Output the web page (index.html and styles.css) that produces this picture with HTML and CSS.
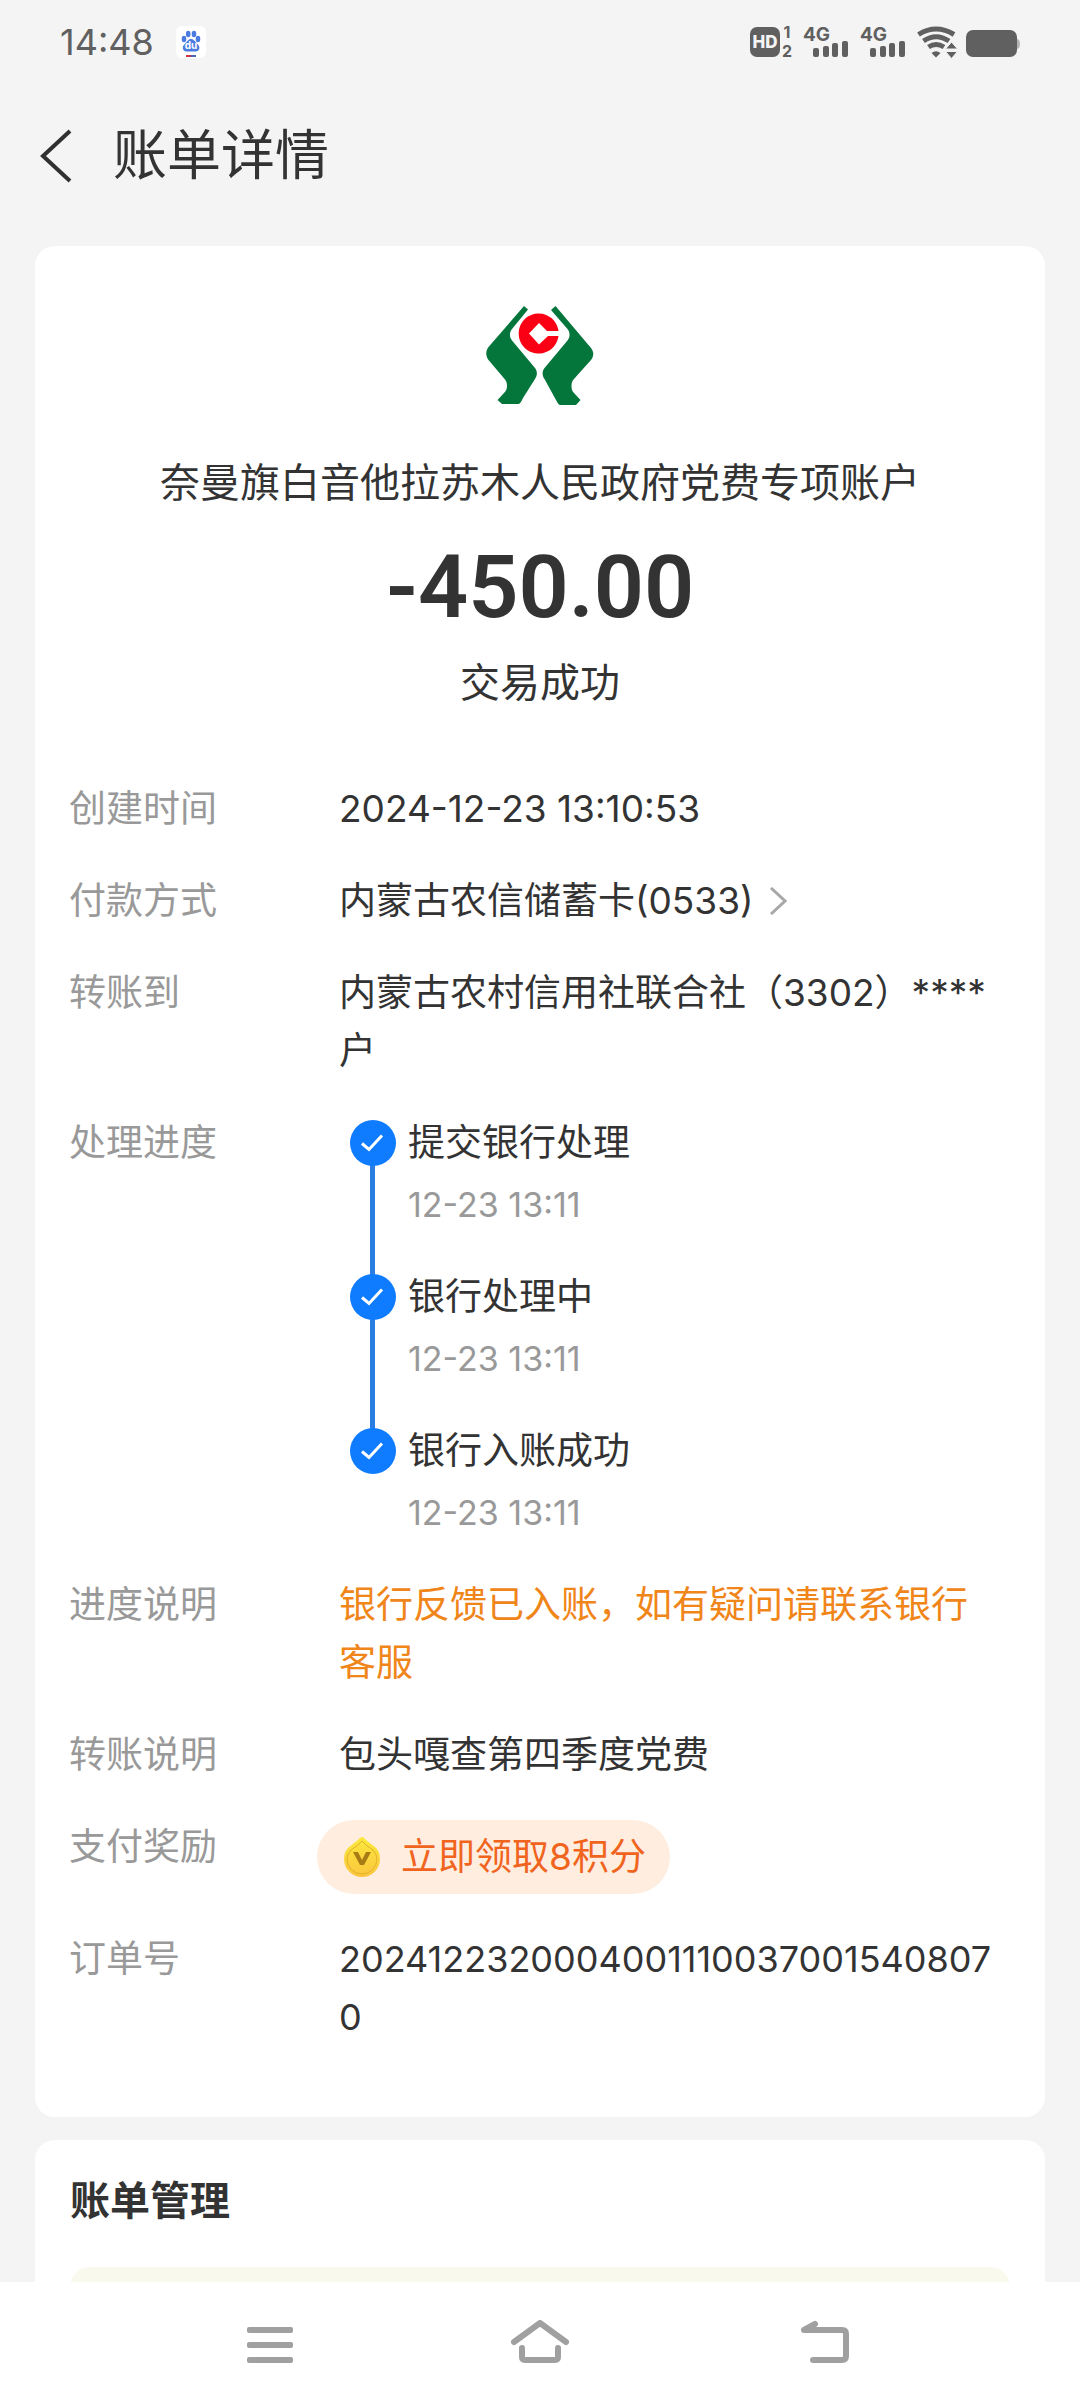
FILE: index.html
```html
<!DOCTYPE html>
<html lang="zh-CN">
<head>
<meta charset="utf-8">
<meta name="viewport" content="width=device-width, initial-scale=1">
<title>账单详情</title>
<link rel="stylesheet" href="styles.css">
</head>
<body>
<div class="screen">
  <div class="status-bar">
    <time class="clock">14:48</time>
    <svg class="app-icon" width="30" height="32" viewBox="0 0 30 32" aria-label="Baidu">
      <rect width="30" height="32" rx="6" fill="#fff"/>
      <g fill="#4a7be0">
        <ellipse cx="8" cy="13" rx="2.300" ry="3.300"/>
        <ellipse cx="12.200" cy="8" rx="2.300" ry="3.300"/>
        <ellipse cx="18" cy="8" rx="2.300" ry="3.300"/>
        <ellipse cx="22" cy="13" rx="2.300" ry="3.300"/>
        <path d="M15 13c2.500 0 3.500 2 5 3.600 1.700 1.700 3.400 3 3.400 5.200 0 2.200-1.600 3.700-3.800 3.700H10.600C8.300 25.500 6.800 24 6.800 21.800c0-2.200 1.700-3.500 3.300-5.200C11.600 15 12.500 13 15 13z"/>
      </g>
      <text class="paw-text" x="15" y="23" text-anchor="middle">du</text>
      <path d="M10 30h5" stroke="#c9364c" stroke-width="2"/><path d="M15 30h5" stroke="#4a62b8" stroke-width="2"/>
    </svg>
    <svg class="indicators" width="270" height="48" viewBox="0 -8 270 48" fill="#606060" aria-label="HD 4G">
      <rect width="30" height="30" y="1" rx="7"/>
      <text class="hd" x="15" y="22" text-anchor="middle">HD</text>
      <text class="sim" x="37" y="12" text-anchor="middle">1</text>
      <text class="sim" x="37" y="31" text-anchor="middle">2</text>
      <text class="net" x="53" y="15">4G</text>
      <rect x="63" y="22" width="6" height="9" rx="2"/><rect x="73" y="20" width="6" height="11" rx="2"/><rect x="82" y="17" width="6" height="14" rx="2"/><rect x="92" y="15" width="6" height="16" rx="2"/>
      <text class="net" x="110" y="15">4G</text>
      <rect x="120" y="22" width="6" height="9" rx="2"/><rect x="130" y="20" width="6" height="11" rx="2"/><rect x="139" y="17" width="6" height="14" rx="2"/><rect x="149" y="15" width="6" height="16" rx="2"/>
      <g fill="none" stroke="#606060" stroke-width="5">
        <path d="M168.500 8.500Q186-2.500 204 8.500"/><path d="M173.500 15Q186 6.500 199 15"/><path d="M178.500 21Q186 16 194 21"/>
      </g>
      <path d="M181.500 27Q186 23.500 190.500 27L186 31.500z"/>
      <path d="M201.500 16l6 7h-12zM201.500 32.500l6-7h-12z" stroke="#f4f4f4" stroke-width="1"/>
      <rect x="216" y="4" width="51" height="27" rx="7"/>
      <path d="M267 13c4 0 4 10 0 10z" fill="#b4b4b4"/>
    </svg>
  </div>

  <header class="title-bar">
    <button class="back" aria-label="返回"><svg width="32" height="54" viewBox="0 0 32 54"><path d="M30 2L3 27l27 25" fill="none" stroke="#303030" stroke-width="4"/></svg></button>
    <h1>账单详情</h1>
  </header>

  <main>
    <section class="card bill">
      <svg class="logo" width="108" height="100" viewBox="0 0 108 100" fill="#04763b">
        <path d="M38 0l4 3.500L26 23c-2.500 3-3 8 0 11.500L49 62c2.500 3 2.500 7.500 0 11L37 92c-2 4-3 6-5 6H16l-4.500-4L18 87c2-2 3-4 3-7 0-3-.5-4.500-2-6.500L2.500 54c-3-4-3-9 0-13z"/>
        <path d="M69.500 0l-4.500 4L81.500 23c2.500 3 3 8 0 11.500L58.500 62c-2.500 3-2.500 7.500 0 11L70 94c2 4 3 5 4.500 5H90l4.500-5-6.500-7c-2-2-2.500-4-2.500-7 0-3 .5-4.500 2-6.500L105 54c3-4 3-8 0-12z"/>
        <path fill="#fb0014" d="M72.500 25A20 20 0 1 0 72.500 30H62l-9 8.500L43 27.500 53 17l8 8z"/>
      </svg>
      <h2>奈曼旗白音他拉苏木人民政府党费专项账户</h2>
      <p class="amount">-450.00</p>
      <p class="state">交易成功</p>

      <dl class="details">
        <div class="row"><dt>创建时间</dt><dd>2024-12-23 13:10:53</dd></div>
        <div class="row"><dt>付款方式</dt><dd><a class="method" href="#">内蒙古农信储蓄卡(0533)<svg width="18" height="28" viewBox="0 0 18 28"><path d="M2 1l14 13L2 27" fill="none" stroke="#a8a8a8" stroke-width="3"/></svg></a></dd></div>
        <div class="row"><dt>转账到</dt><dd>内蒙古农村信用社联合社（3302）****户</dd></div>
        <div class="row"><dt>处理进度</dt><dd>
          <ol class="steps">
            <li><svg class="tick" width="46" height="46" viewBox="0 0 46 46"><circle cx="23" cy="23" r="23"/><path d="M12 23.500l7 6L32 15.500"/></svg><div><p>提交银行处理</p><time>12-23 13:11</time></div></li>
            <li><svg class="tick" width="46" height="46" viewBox="0 0 46 46"><circle cx="23" cy="23" r="23"/><path d="M12 23.500l7 6L32 15.500"/></svg><div><p>银行处理中</p><time>12-23 13:11</time></div></li>
            <li><svg class="tick" width="46" height="46" viewBox="0 0 46 46"><circle cx="23" cy="23" r="23"/><path d="M12 23.500l7 6L32 15.500"/></svg><div><p>银行入账成功</p><time>12-23 13:11</time></div></li>
          </ol>
        </dd></div>
        <div class="row"><dt>进度说明</dt><dd class="notice">银行反馈已入账，如有疑问请联系银行客服</dd></div>
        <div class="row"><dt>转账说明</dt><dd>包头嘎查第四季度党费</dd></div>
        <div class="row"><dt>支付奖励</dt><dd>
          <button class="reward">
            <svg width="38" height="42" viewBox="0 0 38 42">
              <defs><linearGradient id="coin" x2="0" y2="1"><stop stop-color="#fbe93c"/><stop offset="1" stop-color="#fbc53e"/></linearGradient></defs>
              <path d="M19 1q2 0 4 3l9 7q5 4 5 12a18 18 0 0 1-36 0q0-8 5-12l9-7q2-3 4-3z" fill="url(#coin)"/>
              <path d="M19 5q2 2 4 4l7 5q4 4 4 9a15 15 0 0 1-30 0q0-5 4-9l7-5q2-2 4-4z" fill="none" stroke="#e3b22c"/>
              <path d="M10 16h5l4 8 4-8h5l-7 13h-4z" fill="#a87c14"/>
            </svg>
            <span>立即领取8积分</span>
          </button>
        </dd></div>
        <div class="row"><dt>订单号</dt><dd class="order">20241223200040011100370015408070</dd></div>
      </dl>
    </section>

    <section class="card manage">
      <h2>账单管理</h2>
      <div class="tip"></div>
    </section>
  </main>

  <nav class="nav-bar">
    <button aria-label="菜单"><svg width="46" height="44" viewBox="0 0 46 44" fill="#a0a0a0"><rect y="7" width="46" height="6" rx="2"/><rect y="22" width="46" height="6" rx="2"/><rect y="37" width="46" height="6" rx="2"/></svg></button>
    <button aria-label="主页"><svg width="58" height="44" viewBox="0 0 58 44" fill="none" stroke="#a0a0a0" stroke-width="6" stroke-linecap="round" stroke-linejoin="round"><path d="M3 22L29 3l26 19"/><path d="M11 28v9q0 3 4 3h28q4 0 4-3V28"/></svg></button>
    <button aria-label="返回"><svg width="48" height="44" viewBox="0 0 48 44" fill="none" stroke="#a0a0a0" stroke-width="6" stroke-linecap="round" stroke-linejoin="round"><path d="M14 4L3 10h38q4 0 4 4v22q0 4-4 4H12"/></svg></button>
  </nav>
</div>
</body>
</html>
```

FILE: styles.css
```css
* {
  box-sizing: border-box;
  margin: 0;
  padding: 0;
}

body {
  background: #f4f4f4;
  color: #333;
  font-family: Inter, "Noto Sans CJK SC", sans-serif;
  font-size: 37px;
  line-height: 58px;
}

button {
  border: 0;
  background: none;
  font: inherit;
  cursor: pointer;
}

svg {
  display: block;
  flex: none;
}

.screen {
  display: flex;
  flex-direction: column;
  height: 100vh;
  overflow: hidden;
}

.status-bar {
  display: flex;
  align-items: center;
  flex: none;
  height: 84px;
  padding: 0 60px;
}

.clock {
  color: #606060;
  font-size: 36px;
}

.app-icon {
  margin-left: 22px;
}

.indicators {
  margin-left: auto;
}

.paw-text {
  fill: #fff;
  font-size: 10px;
  font-weight: 700;
}

.hd {
  fill: #f4f4f4;
  font-size: 17px;
  font-weight: 800;
}

.sim {
  font-size: 16px;
  font-weight: 700;
}

.net {
  font-size: 19px;
  font-weight: 700;
}

.title-bar {
  display: flex;
  align-items: center;
  flex: none;
  gap: 41px;
  height: 144px;
  padding: 0 40px;
}

.title-bar h1 {
  font-size: 54px;
  font-weight: 400;
}

main {
  display: flex;
  flex-direction: column;
  flex: 1;
  gap: 23px;
  min-height: 0;
  padding: 18px 35px 0;
  overflow: hidden;
}

.card {
  flex: none;
  border-radius: 20px;
  background: #fff;
}

.bill {
  display: flex;
  flex-direction: column;
  align-items: center;
  padding: 60px 34px 71px;
}

.bill h2 {
  margin-top: 48px;
  font-size: 40px;
  font-weight: 400;
}

.amount {
  margin-top: 20px;
  font-family: Roboto, sans-serif;
  font-size: 88px;
  font-weight: 600;
  line-height: 110px;
}

.state {
  margin-top: 12px;
  font-size: 40px;
}

.details {
  display: flex;
  flex-direction: column;
  align-self: stretch;
  gap: 34px;
  margin-top: 68px;
}

.row {
  display: grid;
  grid-template-columns: 270px 1fr;
  padding-right: 10px;
}

dt {
  color: #999;
}

dd {
  min-width: 0;
}

.method {
  display: inline-flex;
  align-items: center;
  gap: 15px;
  color: inherit;
  text-decoration: none;
}

.steps {
  display: flex;
  flex-direction: column;
  gap: 34px;
  padding-left: 11px;
  list-style: none;
}

.steps li {
  display: flex;
  position: relative;
  gap: 12px;
}

.steps li + li::before {
  position: absolute;
  bottom: 90px;
  left: 20px;
  width: 5px;
  height: 140px;
  background: #2a7de1;
  content: "";
}

.tick {
  position: relative;
  z-index: 1;
  margin-top: 6px;
}

.tick circle {
  fill: #0f7bff;
}

.tick path {
  fill: none;
  stroke: #fff;
  stroke-width: 3;
}

.steps time {
  display: block;
  padding-top: 4px;
  color: #999;
  font-size: 34px;
}

.notice {
  color: #f08519;
}

.order {
  font-size: 36px;
  word-break: break-all;
}

.reward {
  display: flex;
  align-items: center;
  gap: 20px;
  height: 74px;
  margin: 2px 0 2px -22px;
  padding: 0 24px 0 26px;
  border-radius: 37px;
  background: #ffeedf;
  color: #f0641e;
}

.manage {
  padding: 32px 35px 0;
}

.manage h2 {
  font-size: 40px;
  font-weight: 700;
}

.tip {
  height: 120px;
  margin-top: 37px;
  border-radius: 20px;
  background: #f9f9ee;
}

.nav-bar {
  display: grid;
  grid-template-columns: 9fr 9fr 10fr;
  flex: none;
  height: 126px;
  padding: 0 105px 6px 135px;
  background: #fff;
}

.nav-bar button {
  display: flex;
  align-items: center;
  justify-content: center;
}
```
